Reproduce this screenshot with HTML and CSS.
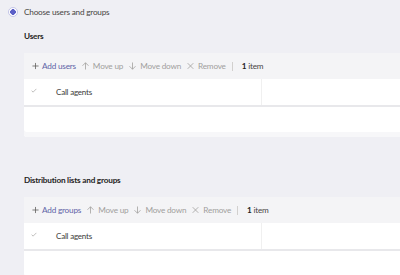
FILE: index.html
```html
<!DOCTYPE html>
<html lang="en">
<head>
  <meta charset="UTF-8">
  <meta name="viewport" content="width=device-width, initial-scale=1.0">
  <title>Choose users and groups</title>
  <link rel="stylesheet" href="styles.css">
</head>
<body>
  <label class="choice">
    <span class="radio"></span>
    Choose users and groups
  </label>

  <section class="group">
    <h2>Users</h2>
    <div class="card">
      <div class="toolbar">
        <span class="tool active">
          <svg viewBox="0 0 8 8"><path d="M4 0.5v7M0.5 4h7"/></svg>
          Add users
        </span>
        <span class="tool">
          <svg viewBox="0 0 8 9"><path d="M4 8.5V0.8M0.6 4.2L4 0.8 7.4 4.2"/></svg>
          Move up
        </span>
        <span class="tool">
          <svg viewBox="0 0 8 9"><path d="M4 0.5v7.7M0.6 4.8L4 8.2 7.4 4.8"/></svg>
          Move down
        </span>
        <span class="tool">
          <svg viewBox="0 0 8 8"><path d="M0.8 0.8l6.4 6.4M7.2 0.8L0.8 7.2"/></svg>
          Remove
        </span>
        <span class="divider"></span>
        <span class="count"><b>1</b> item</span>
      </div>
      <div class="row">
        <span class="cell first">
          <svg class="check" viewBox="0 0 8 6"><path d="M0.8 3.2l2 2 4.4-4.4"/></svg>
          Call agents
        </span>
        <span class="cell"></span>
      </div>
      <div class="empty"></div>
    </div>
  </section>

  <section class="group">
    <h2>Distribution lists and groups</h2>
    <div class="card">
      <div class="toolbar">
        <span class="tool active">
          <svg viewBox="0 0 8 8"><path d="M4 0.5v7M0.5 4h7"/></svg>
          Add groups
        </span>
        <span class="tool">
          <svg viewBox="0 0 8 9"><path d="M4 8.5V0.8M0.6 4.2L4 0.8 7.4 4.2"/></svg>
          Move up
        </span>
        <span class="tool">
          <svg viewBox="0 0 8 9"><path d="M4 0.5v7.7M0.6 4.8L4 8.2 7.4 4.8"/></svg>
          Move down
        </span>
        <span class="tool">
          <svg viewBox="0 0 8 8"><path d="M0.8 0.8l6.4 6.4M7.2 0.8L0.8 7.2"/></svg>
          Remove
        </span>
        <span class="divider"></span>
        <span class="count"><b>1</b> item</span>
      </div>
      <div class="row">
        <span class="cell first">
          <svg class="check" viewBox="0 0 8 6"><path d="M0.8 3.2l2 2 4.4-4.4"/></svg>
          Call agents
        </span>
        <span class="cell"></span>
      </div>
      <div class="empty"></div>
    </div>
  </section>
</body>
</html>
```

FILE: styles.css
```css
body {
  margin: 0;
  padding: 0;
  font-family: Lato, "Open Sans", sans-serif;
  font-size: 8.2px;
  letter-spacing: -0.2px;
  color: #252423;
  background-color: #efeff4;
  overflow: hidden;
}

.choice {
  display: flex;
  align-items: center;
  gap: 6px;
  height: 12px;
  padding: 6px 0 0 8px;
  color: #484644;
}

.radio {
  box-sizing: border-box;
  width: 10px;
  height: 10px;
  border-radius: 50%;
  border: 1px solid #c5c6e8;
  background: radial-gradient(circle, #5b5fc7 0 2.6px, #fff 3px);
}

.group {
  padding-left: 24px;
}

h2 {
  margin: 0;
  padding-top: 12px;
  height: 12px;
  line-height: 12px;
  font-size: 8.2px;
  font-weight: 700;
  color: #252423;
}

.group + .group h2 {
  padding-top: 37px;
}

.card {
  margin-top: 11px;
  background-color: #fff;
  border-radius: 3px 0 0 3px;
  padding-bottom: 5px;
  box-shadow: inset 0 -5px 0 #f7f7f9;
}

.toolbar {
  display: flex;
  align-items: center;
  height: 26px;
  padding-left: 8px;
  background-color: #f4f4f6;
  color: #a19f9d;
}

.tool {
  display: flex;
  align-items: center;
  gap: 4px;
  margin-right: 6px;
}

.tool svg {
  width: 7px;
  height: 8px;
  fill: none;
  stroke: currentColor;
  stroke-width: 0.9;
}

.tool.active {
  color: #6264a7;
  gap: 3px;
}

.tool.active svg {
  stroke: #605e5c;
}

.divider {
  width: 1px;
  height: 9px;
  background-color: #d2d0ce;
  margin: 0 9px 0 0;
}

.count {
  color: #484644;
}

.count b {
  font-weight: 700;
  color: #252423;
}

.row {
  display: flex;
  height: 26px;
  border-bottom: 2px solid #e8e8eb;
}

.cell {
  display: flex;
  align-items: center;
  flex: 1;
}

.cell.first {
  flex: 0 0 238px;
  border-right: 1px solid #f0f0f0;
  padding-left: 7px;
  box-sizing: border-box;
  color: #3b3a39;
  font-size: 8px;
}

.check {
  width: 6px;
  height: 5px;
  margin: -4px 19px 0 0;
  fill: none;
  stroke: #a19f9d;
  stroke-width: 0.9;
}

.empty {
  height: 25px;
}
```
